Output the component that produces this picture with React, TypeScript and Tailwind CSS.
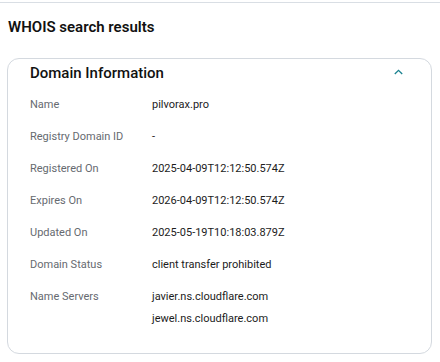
import React from "react";

const rows: { label: string; values: string[] }[] = [
  { label: "Name", values: ["pilvorax.pro"] },
  { label: "Registry Domain ID", values: ["-"] },
  { label: "Registered On", values: ["2025-04-09T12:12:50.574Z"] },
  { label: "Expires On", values: ["2026-04-09T12:12:50.574Z"] },
  { label: "Updated On", values: ["2025-05-19T10:18:03.879Z"] },
  { label: "Domain Status", values: ["client transfer prohibited"] },
  { label: "Name Servers", values: ["javier.ns.cloudflare.com", "jewel.ns.cloudflare.com"] },
];

export default function App() {
  return (
    <div className="w-[440px] h-[362px] bg-white overflow-hidden" style={{ fontFamily: "Roboto, 'Noto Sans', sans-serif" }}>
      <div className="mt-[2px] border-t border-[#d9dee4]" />
      <h1 className="ml-[8px] mt-[14px] text-[15px] leading-[20px] font-semibold text-[#111111]">WHOIS search results</h1>
      <div className="mt-[21px] ml-[7px] w-[425px] h-[296px] rounded-[12px] border border-[#d4d9df]">
        <div className="flex items-center justify-between pl-[22px] pr-[28px] pt-[0px] h-[28px]">
          <span className="text-[15px] font-medium text-[#111111]">Domain Information</span>
          <svg width="9" height="6" viewBox="0 0 9 6" fill="none" className="-mt-[2px]">
            <path d="M0.8 5 L4.5 1.3 L8.2 5" stroke="#1a8290" strokeWidth="1.3" />
          </svg>
        </div>
        <div className="mt-[2px] pl-[22px] flex flex-col">
          {rows.map((r) => (
            <div key={r.label} className="flex min-h-[32px] text-[11px]">
              <div className="w-[122px] text-[#666a70] leading-[16px] pt-[8px]">{r.label}</div>
              <div className="flex flex-col text-[#1c1c1c]">
                {r.values.map((v, i) => (
                  <div key={v} className={i === 0 ? "leading-[16px] pt-[8px]" : "leading-[16px] pt-[6px]"}>{v}</div>
                ))}
              </div>
            </div>
          ))}
        </div>
      </div>
    </div>
  );
}
